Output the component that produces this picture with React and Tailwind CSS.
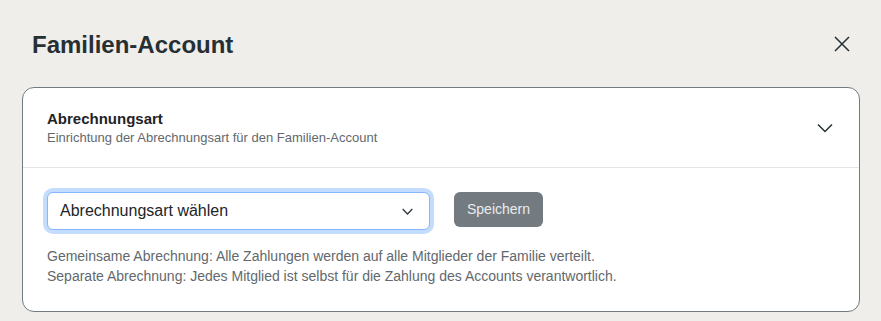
import React, { useState } from "react";

const font = { fontFamily: '"Liberation Sans", Arial, sans-serif' };

function Chevron({ className, width = 1.5 }) {
  return (
    <svg viewBox="0 0 16 10" fill="none" className={className}>
      <path d="M1 1.5 L8 8.5 L15 1.5" stroke="currentColor" strokeWidth={width} />
    </svg>
  );
}

export default function App() {
  const [mode, setMode] = useState("");

  return (
    <div
      className="min-h-[321px] w-full bg-[#efeeeb] px-[22px] pt-[30px] pr-[21px]"
      style={font}
    >
      <div className="flex items-center justify-between pl-[10px] pr-[10px]">
        <h1 className="text-[24px] leading-[29px] font-bold text-[#263034]">
          Familien-Account
        </h1>
        <button type="button" className="text-[#263034] -mt-[1px]">
          <svg viewBox="0 0 16 16" className="w-[16px] h-[16px]" fill="none">
            <path d="M1 1 L15 15 M15 1 L1 15" stroke="currentColor" strokeWidth="1.5" />
          </svg>
        </button>
      </div>

      <div className="mt-[28px] bg-white border border-[#737b80] rounded-[12px]">
        <div className="flex items-center justify-between px-6 pt-5 pb-5 border-b border-[#e3e4e5]">
          <div>
            <div className="text-[15px] leading-[21px] font-bold text-[#1f2326]">
              Abrechnungsart
            </div>
            <div className="text-[13px] leading-[18px] text-[#62686d]">
              Einrichtung der Abrechnungsart für den Familien-Account
            </div>
          </div>
          <Chevron className="w-[16px] h-[10px] text-[#263034] mr-[2px] mt-[1px]" />
        </div>

        <div className="px-6 pt-6 pb-[25px]">
          <div className="flex items-start gap-6">
            <div className="relative w-[383px]">
              <select
                value={mode}
                onChange={(e) => setMode(e.target.value)}
                className="appearance-none w-full h-[38px] pl-3 pr-9 text-[16px] text-[#212529] bg-white border border-[#86b7fe] rounded-[6px] ring-4 ring-[#c4dcfd] outline-none"
                style={font}
              >
                <option value="">Abrechnungsart wählen</option>
                <option value="shared">Gemeinsame Abrechnung</option>
                <option value="separate">Separate Abrechnung</option>
              </select>
              <Chevron width={2} className="pointer-events-none absolute right-[17px] top-[16px] w-[11px] h-[7px] text-[#343a40]" />
            </div>
            <button
              type="button"
              className="w-[89px] h-[35px] rounded-[6px] bg-[#737b80] text-[14px] text-[#e9ecef]"
            >
              Speichern
            </button>
          </div>
          <div className="mt-4 text-[14px] leading-[20px] text-[#62686d]">
            <p>Gemeinsame Abrechnung: Alle Zahlungen werden auf alle Mitglieder der Familie verteilt.</p>
            <p>Separate Abrechnung: Jedes Mitglied ist selbst für die Zahlung des Accounts verantwortlich.</p>
          </div>
        </div>
      </div>
    </div>
  );
}
